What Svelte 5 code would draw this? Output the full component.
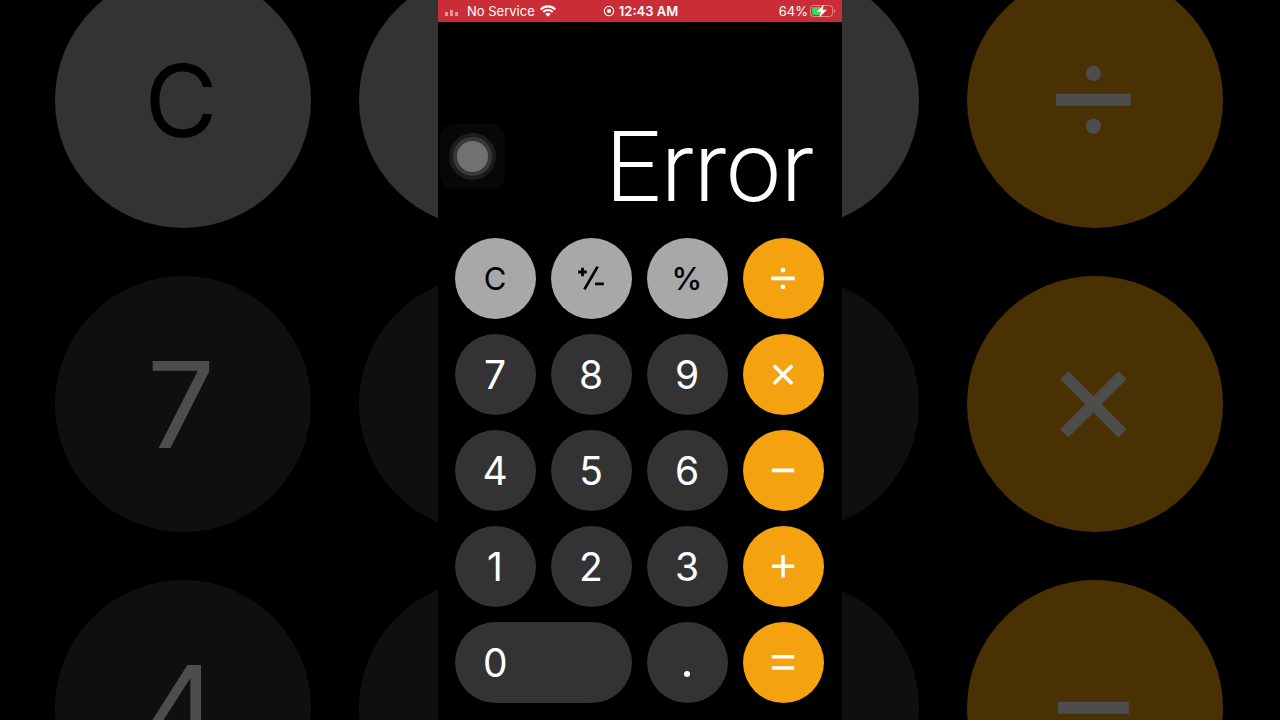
<script lang="ts">
  type Key = { id: string; label: string; kind: "fn" | "digit" | "op"; text?: string };

  const keys: Key[] = [
    { id: "clear", label: "Clear", kind: "fn", text: "C" },
    { id: "sign", label: "Plus minus", kind: "fn" },
    { id: "percent", label: "Percent", kind: "fn", text: "%" },
    { id: "divide", label: "Divide", kind: "op" },
    { id: "7", label: "7", kind: "digit", text: "7" },
    { id: "8", label: "8", kind: "digit", text: "8" },
    { id: "9", label: "9", kind: "digit", text: "9" },
    { id: "multiply", label: "Multiply", kind: "op" },
    { id: "4", label: "4", kind: "digit", text: "4" },
    { id: "5", label: "5", kind: "digit", text: "5" },
    { id: "6", label: "6", kind: "digit", text: "6" },
    { id: "minus", label: "Subtract", kind: "op" },
    { id: "1", label: "1", kind: "digit", text: "1" },
    { id: "2", label: "2", kind: "digit", text: "2" },
    { id: "3", label: "3", kind: "digit", text: "3" },
    { id: "plus", label: "Add", kind: "op" },
    { id: "zero", label: "0", kind: "digit", text: "0" },
    { id: "point", label: "Decimal point", kind: "digit" },
    { id: "equals", label: "Equals", kind: "op" },
  ];

  // the backdrop only has room for the first three rows,
  // and the phone hides the text of the middle columns
  const backdropKeys = keys.slice(0, 12);

  // strokes on an 81 x 81 key
  const glyphs: Record<string, { d: string; width: number; dots?: number[][] }> = {
    sign: { d: "M27.2 34h8.6M31.5 29.7v8.6M44 45.8h8.8M33.4 51.4L46.6 28.6", width: 2.8 },
    divide: { d: "M28.2 40.4h23.6", width: 3.8, dots: [[40, 32.1, 2.4], [40, 48.8, 2.4]] },
    multiply: { d: "M30.8 31.4l18.4 18.4M49.2 31.4L30.8 49.8", width: 3.6 },
    minus: { d: "M28.8 40.4h22.4", width: 3.8 },
    plus: { d: "M28.8 40.2h22.4M40 29v22.4", width: 3.6 },
    equals: { d: "M28.8 34.8h22.4M28.8 46h22.4", width: 3.6 },
    point: { d: "", width: 0, dots: [[40, 52, 3]] },
  };

  let display = $state("Error");

  function press(key: Key) {
    if (key.id === "clear") {
      display = "0";
    } else if (key.kind === "digit" && key.text) {
      display = display === "Error" || display === "0" ? key.text : display + key.text;
    }
  }
</script>

{#snippet face(key: Key)}
  {#if key.text}
    {key.text}
  {:else}
    <svg class="glyph" viewBox="0 0 81 81" aria-hidden="true">
      <path d={glyphs[key.id].d} fill="none" stroke="currentColor" stroke-width={glyphs[key.id].width} />
      {#each glyphs[key.id].dots ?? [] as [cx, cy, r]}
        <circle {cx} {cy} {r} fill="currentColor" />
      {/each}
    </svg>
  {/if}
{/snippet}

<div class="stage">
  <div class="backdrop" aria-hidden="true">
    <div class="pad large">
      {#each backdropKeys as key, i}
        <span class="key {key.kind} {key.id}">
          {#if i % 4 === 0 || i % 4 === 3}{@render face(key)}{/if}
        </span>
      {/each}
    </div>
  </div>

  <main class="phone">
    <header class="status">
      <div class="side">
        <svg class="signal" width="14" height="12" viewBox="0 0 14 12" aria-hidden="true">
          <path d="M0 7h3v4H0zM5 5h3v6H5zM10 7h3v4h-3z" fill="currentColor" />
        </svg>
        <span class="carrier">No Service</span>
        <svg width="16" height="12" viewBox="0 0 16 12" aria-hidden="true">
          <path d="M.8 4.4a10.2 10.2 0 0 1 14.4 0M3.3 7a6.7 6.7 0 0 1 9.4 0" fill="none" stroke="currentColor" stroke-width="2.1" />
          <path d="M8 11.8L5.3 9.1a3.9 3.9 0 0 1 5.4 0z" fill="currentColor" />
        </svg>
      </div>
      <div class="clock">
        <svg width="12" height="12" viewBox="0 0 12 12" aria-hidden="true">
          <circle cx="6" cy="6" r="4.7" fill="none" stroke="currentColor" stroke-width="1.1" />
          <circle cx="6" cy="6" r="2.1" fill="currentColor" />
        </svg>
        <time>12:43 AM</time>
      </div>
      <div class="side end">
        <span>64%</span>
        <svg width="26" height="14" viewBox="0 0 26 14" aria-hidden="true">
          <rect x=".5" y="1.5" width="22" height="11" rx="3" fill="none" stroke="#fff" stroke-opacity=".45" />
          <path d="M24 5.2v3.6c1-.4 1.4-1 1.4-1.8S25 5.6 24 5.2z" fill="#fff" fill-opacity=".5" />
          <path d="M4 3h6v8H4a2 2 0 0 1-2-2V5a2 2 0 0 1 2-2z" fill="#3fd45c" />
          <path d="M14 .4L6.6 8h4.2L9.2 13.6 17 5.800h-4.4z" fill="#fff" />
        </svg>
      </div>
    </header>

    <button class="assistive" aria-label="AssistiveTouch menu"><span></span></button>

    <output class="display">{display}</output>

    <div class="pad">
      {#each keys as key}
        <button class="key {key.kind} {key.id}" aria-label={key.label} onclick={() => press(key)}>
          {@render face(key)}
        </button>
      {/each}
    </div>
  </main>
</div>

<style>
  :global(body) {
    margin: 0;
    background: #000;
  }

  .stage {
    position: relative;
    min-height: 100vh;
    display: flex;
    justify-content: center;
    overflow: hidden;
    font-family: Inter, "Liberation Sans", sans-serif;
    color: #fff;
  }

  /* enlarged, dimmed keypad behind the phone */
  .backdrop {
    position: absolute;
    inset: -28px 0 0;
    display: flex;
    justify-content: center;
    align-items: flex-start;
    opacity: 0.3;
  }

  .phone {
    position: relative;
    box-sizing: border-box;
    width: 100%;
    max-width: 404px;
    display: flex;
    flex-direction: column;
    background: #000;
  }

  .status {
    display: grid;
    grid-template-columns: 1fr auto 1fr;
    align-items: center;
    height: 22px;
    padding: 0 6px 0 7px;
    background: #cb2d36;
    font-size: 13px;
    line-height: 22px;
  }

  .side,
  .clock {
    display: flex;
    align-items: center;
    gap: 4px;
  }

  .side.end {
    justify-content: flex-end;
    gap: 2px;
  }

  .signal {
    opacity: 0.5;
  }

  .carrier {
    margin: 0 1px 0 4px;
  }

  .clock {
    font-weight: 600;
  }

  .assistive {
    position: absolute;
    top: 124px;
    left: 2px;
    width: 65px;
    height: 65px;
    padding: 0;
    display: grid;
    place-items: center;
    border: 0;
    border-radius: 14px;
    background: #070707;
  }

  .assistive span {
    width: 31px;
    height: 31px;
    border-radius: 50%;
    background: #717171;
    box-shadow: 0 0 0 4px #383838, 0 0 0 8px #1c1c1c;
  }

  .display {
    flex: 1;
    display: flex;
    align-items: flex-end;
    justify-content: flex-end;
    padding: 0 28px 10px 0;
    font-family: Roboto, Inter, sans-serif;
    font-size: 98px;
    font-weight: 300;
    line-height: 120px;
  }

  .pad {
    --size: 81px;
    display: grid;
    grid-template-columns: repeat(4, var(--size));
    grid-auto-rows: var(--size);
    gap: 15px;
    justify-content: center;
    padding: 0 1px 17px 0;
    font-size: 39px;
  }

  .pad.large {
    --size: 256px;
    gap: 48px;
    padding: 0 2px 0 0;
    font-size: 120px;
  }

  .key {
    display: flex;
    align-items: center;
    justify-content: center;
    padding: 0 1px 0 0;
    border: 0;
    border-radius: 128px;
    font: inherit;
    color: #fff;
  }

  .large .key {
    padding: 0 4px 0 0;
  }

  .digit {
    background: #333;
  }

  .fn {
    background: #a8a8a8;
    color: #000;
    font-size: 31px;
  }

  .large .fn {
    font-size: 100px;
  }

  .op {
    background: #f5a210;
  }

  .key:has(.glyph) {
    padding: 0;
  }

  .percent {
    font-weight: 500;
  }

  .zero {
    grid-column: span 2;
    justify-content: flex-start;
    padding-left: 28px;
  }

  .glyph {
    width: 100%;
    height: 100%;
  }
</style>
